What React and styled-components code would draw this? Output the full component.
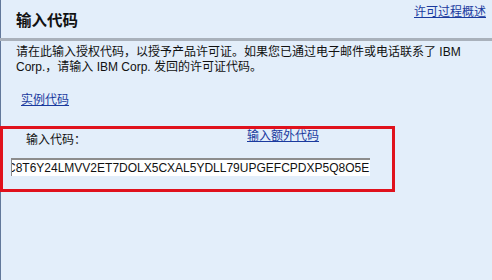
import styled, { createGlobalStyle } from 'styled-components';

const GlobalStyle = createGlobalStyle`
	html, body {
		margin: 0;
		padding: 0;
		background: #e3eefa;
	}
	body {
		font-family: 'Liberation Sans', 'Noto Sans CJK SC', sans-serif;
		font-size: 12px;
		color: #111;
	}
`;

const Page = styled.div`
	min-height: 280px;
	background: #e3eefa;
	box-shadow: inset 1px 0 0 #62789a;
`;

const Header = styled.div`
	display: flex;
	justify-content: space-between;
	height: 38px;
	border-bottom: 3px solid #a9b1bb;
`;

const Title = styled.h1`
	margin: 0;
	padding-left: 16px;
	align-self: center;
	font-size: 15.5px;
	font-weight: bold;
	color: #111;
`;

const Link = styled.a`
	color: #1a3a9e;
	text-decoration: underline;
	font-size: 12px;
	line-height: 14px;
	cursor: pointer;
`;

const HeaderLink = styled(Link)`
	margin: 5px 6px 0 0;
	align-self: flex-start;
`;

const Intro = styled.p`
	margin: 0;
	padding: 4px 20px 0 16px;
	line-height: 15px;
`;

const ExampleLink = styled(Link)`
	display: inline-block;
	margin: 18px 0 0 21px;
`;

const CodeBox = styled.div`
	margin-top: 19px;
	width: 389px;
	height: 60px;
	border: 3px solid #e0111c;
`;

const LabelRow = styled.div`
	display: flex;
	align-items: flex-start;
`;

const Label = styled.span`
	width: 221px;
	padding: 4px 0 0 23px;
	line-height: 15px;
`;

const CodeField = styled.div`
	margin: 10px 0 0 8px;
	width: 358px;
	height: 16px;
	background: #fff;
	border-top: 2px solid #8c8c8c;
	border-left: 1px solid #8c8c8c;
	overflow: hidden;
	white-space: nowrap;
	font-size: 12px;
	line-height: 16px;
	color: #111;
`;

const CodeText = styled.span`
	display: inline-block;
	margin-left: -5px;
`;

export default function App() {
	return (
		<>
			<GlobalStyle />
			<Page>
				<Header>
					<Title>输入代码</Title>
					<HeaderLink>许可过程概述</HeaderLink>
				</Header>
				<Intro>
					请在此输入授权代码，以授予产品许可证。如果您已通过电子邮件或电话联系了 IBM
					Corp.，请输入 IBM Corp. 发回的许可证代码。
				</Intro>
				<ExampleLink>实例代码</ExampleLink>
				<CodeBox>
					<LabelRow>
						<Label>输入代码：</Label>
						<Link>输入额外代码</Link>
					</LabelRow>
					<CodeField>
						<CodeText>C8T6Y24LMVV2ET7DOLX5CXAL5YDLL79UPGEFCPDXP5Q8O5E</CodeText>
					</CodeField>
				</CodeBox>
			</Page>
		</>
	);
}
